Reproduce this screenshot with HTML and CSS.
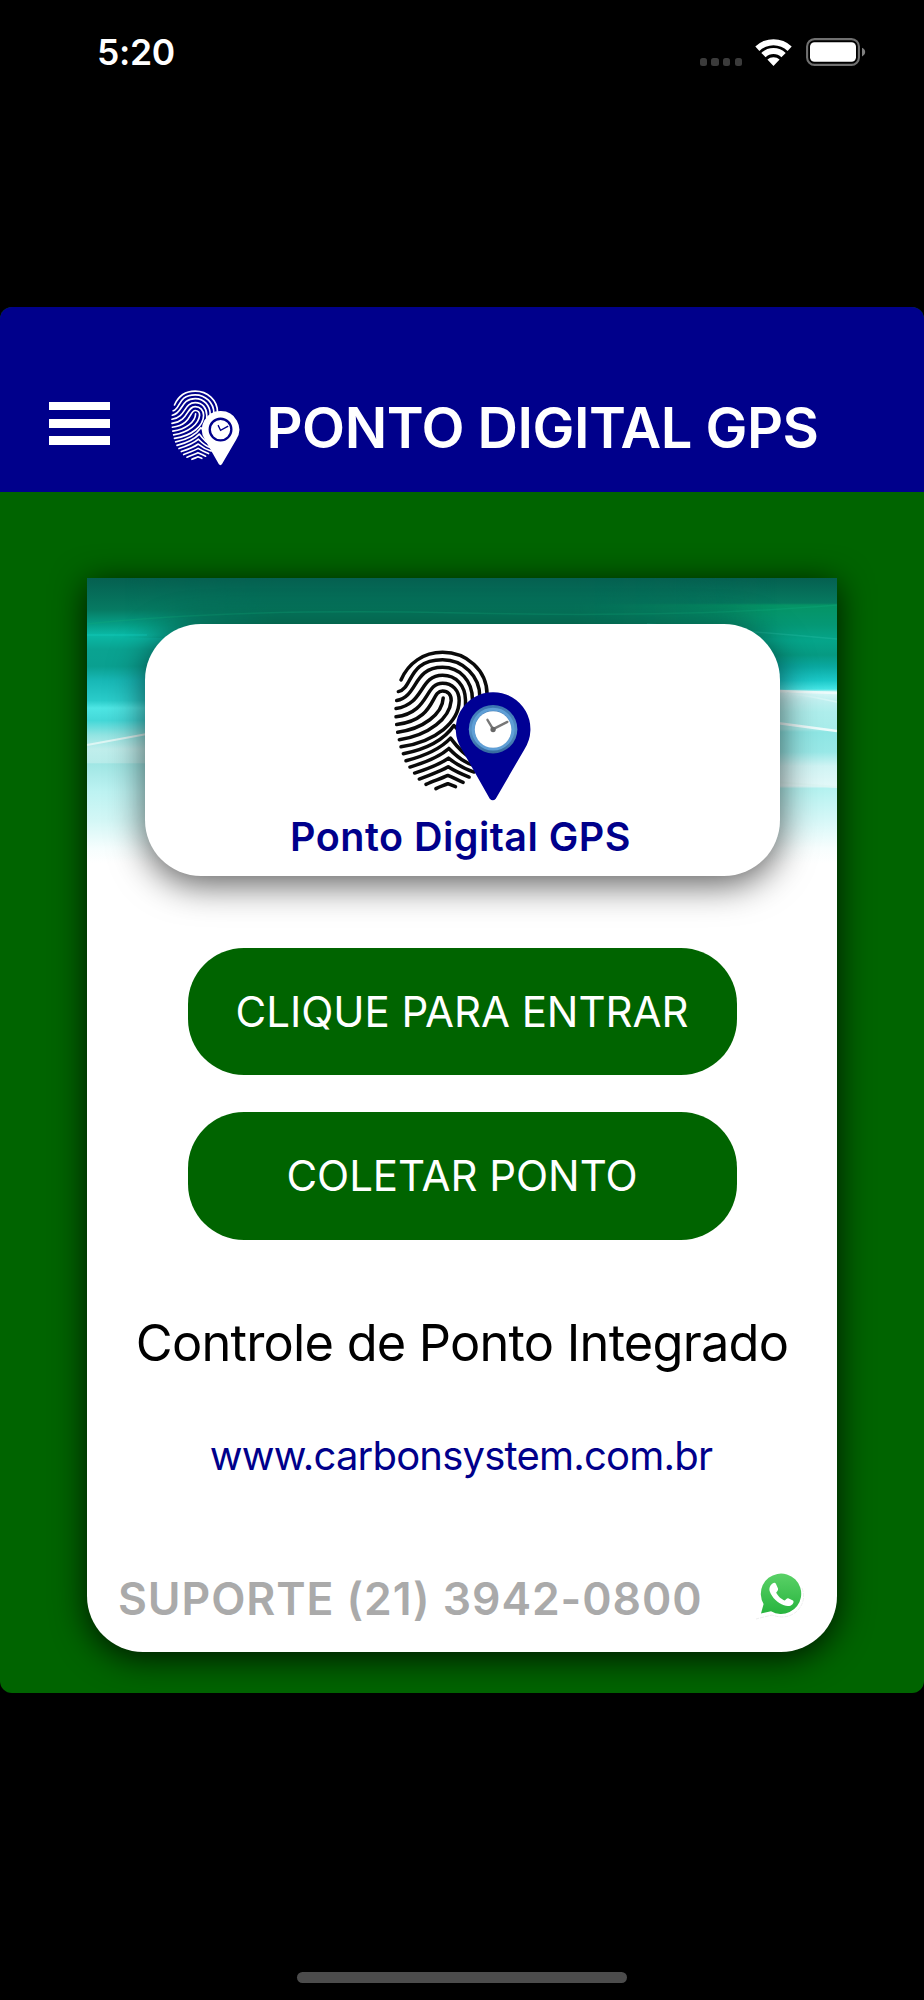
FILE: index.html
```html
<!DOCTYPE html>
<html lang="pt-BR">
<head>
<meta charset="utf-8">
<title>Ponto Digital GPS</title>
<link rel="stylesheet" href="styles.css">
</head>
<body>
<div class="screen">
  <header class="status">
    <span class="time">5:20</span>
    <div class="signals">
      <div class="dots"><i></i><i></i><i></i><i></i></div>
      <svg class="wifi" viewBox="0 0 37 27"><path d="M0.3 7.6A26 26 0 0 1 36.7 7.6L32.6 12A20 20 0 0 0 4.4 12ZM6.3 13.9A17.5 17.5 0 0 1 30.7 13.9L26.4 18.2A11.5 11.5 0 0 0 10.6 18.2ZM12.4 20.6A9 9 0 0 1 24.6 20.6L18.5 27Z"/></svg>
      <svg class="battery" viewBox="0 0 60 28"><rect x="1.1" y="1.1" width="51.8" height="25.8" rx="7.5" fill="none" stroke="#707070" stroke-width="2.1"/><rect x="4" y="4.2" width="46" height="19.6" rx="4.5" fill="#fff"/><path d="M56 9.8C58 10.6 59.2 12.2 59.2 14.1S58 17.6 56 18.4Z" fill="#808080"/></svg>
    </div>
  </header>
  <div class="app">
    <nav class="bar">
      <div class="menu"><i></i><i></i><i></i></div>
      <svg class="mark" viewBox="42 30 412 454">
        <g class="ridges light"><use href="#print"/></g>
        <path class="halo" d="M339 157A111 111 0 0 0 246 329L330 477Q339 487 348 477L434 329A111 111 0 0 0 339 157Z"/>
        <circle cx="340" cy="268" r="65" fill="#fff" stroke="#00008b" stroke-width="14"/>
        <path d="M325 241L340 272L386 247" fill="none" stroke="#00008b" stroke-width="8"/>
      </svg>
      <h1>PONTO DIGITAL GPS</h1>
    </nav>
    <main class="card">
      <svg class="waves" viewBox="0 0 750 285" preserveAspectRatio="none">
        <defs>
          <linearGradient id="wl" x1="0" y1="0" x2="0" y2="1">
            <stop offset="0" stop-color="#056050"/><stop offset=".11" stop-color="#067a62"/><stop offset=".165" stop-color="#06a088"/><stop offset=".2" stop-color="#0ab9a6"/><stop offset=".25" stop-color="#0aa391"/><stop offset=".31" stop-color="#0aa090"/><stop offset=".36" stop-color="#18b8b6"/><stop offset=".43" stop-color="#2accca"/><stop offset=".456" stop-color="#4ee6e4"/><stop offset=".5" stop-color="#44d8d8"/><stop offset=".55" stop-color="#90e4e2"/><stop offset=".6" stop-color="#c0eeec"/><stop offset=".648" stop-color="#b8ecea"/><stop offset=".652" stop-color="#a0e6e4"/><stop offset=".75" stop-color="#bdf3f2"/><stop offset=".85" stop-color="#d3f7f6"/><stop offset=".95" stop-color="#f6fefe"/><stop offset="1" stop-color="#fff"/>
          </linearGradient>
          <linearGradient id="wr" x1="0" y1="0" x2="0" y2="1">
            <stop offset="0" stop-color="#056050"/><stop offset=".088" stop-color="#067a60"/><stop offset=".095" stop-color="#059465"/><stop offset=".165" stop-color="#059875"/><stop offset=".22" stop-color="#05a58a"/><stop offset=".27" stop-color="#069a82"/><stop offset=".31" stop-color="#0aa8a0"/><stop offset=".36" stop-color="#1cc8c8"/><stop offset=".39" stop-color="#45e4e4"/><stop offset=".4" stop-color="#d8f8f8"/><stop offset=".43" stop-color="#c0f0f0"/><stop offset=".47" stop-color="#aeeeec"/><stop offset=".53" stop-color="#a8ecea"/><stop offset=".54" stop-color="#8ee6e4"/><stop offset=".61" stop-color="#98e8e7"/><stop offset=".66" stop-color="#d0f4f4"/><stop offset=".73" stop-color="#e2f8f8"/><stop offset=".738" stop-color="#b4f2f0"/><stop offset=".85" stop-color="#d6f8f8"/><stop offset=".95" stop-color="#f8fefe"/><stop offset="1" stop-color="#fff"/>
          </linearGradient>
          <linearGradient id="top" x1="0" y1="0" x2="0" y2="1"><stop offset="0" stop-color="#056050"/><stop offset="1" stop-color="#058a68"/></linearGradient>
          <linearGradient id="fade"><stop offset=".3" stop-color="#000"/><stop offset=".9" stop-color="#fff"/></linearGradient>
          <linearGradient id="mid"><stop offset=".05" stop-color="#000"/><stop offset=".25" stop-color="#fff"/><stop offset=".65" stop-color="#fff"/><stop offset=".92" stop-color="#000"/></linearGradient>
          <mask id="mr"><rect width="750" height="285" fill="url(#fade)"/></mask>
          <mask id="mm"><rect width="750" height="285" fill="url(#mid)"/></mask>
        </defs>
        <rect width="750" height="285" fill="url(#wl)"/>
        <rect width="750" height="285" fill="url(#wr)" mask="url(#mr)"/>
        <rect width="750" height="60" fill="url(#top)" mask="url(#mm)"/>
        <g fill="none" stroke-width="1.5">
          <path d="M0 46Q150 30 375 35T750 27" stroke="#0fa87c" opacity=".35"/>
          <path d="M0 57H60" stroke="#12c4b6" opacity=".6"/>
          <path d="M560 46Q650 52 750 61" stroke="#22b8a0" opacity=".45"/>
          <path d="M0 167L60 156" stroke="#def6f4" stroke-width="2"/>
          <path d="M690 113L750 115M690 145L750 153" stroke="#ecfbfb" stroke-width="2.5"/>
          <path d="M700 115Q725 118 750 124" stroke="#d4f6f6"/>
          <path d="M690 204L750 209" stroke="#dcf6f4" stroke-width="2"/>
        </g>
      </svg>
      <section class="logo">
        <svg class="emblem" viewBox="42 30 412 454">
          <defs>
            <g id="print">
              <path d="M63 120C85 70 130 37 188 37C260 37 322 90 322 165"/>
              <path d="M55 155C100 145 82 59 188 59C250 59 300 108 300 170"/>
              <path d="M50 182C115 170 98 82 188 82C240 82 278 122 278 180"/>
              <path d="M48 206C135 193 117 106 188 106C230 106 256 138 257 180V200"/>
              <path d="M48 231C150 218 133 130 188 130C218 130 238 152 238 182C238 245 170 305 63 321"/>
              <path d="M50 254C168 240 152 153 188 153C204 153 215 165 214 182C209 235 150 285 58 300"/>
              <path d="M190 174C188 222 130 267 53 277"/>
              <path d="M70 342C150 326 197 294 222 257L240 275"/>
              <path d="M78 363C140 347 184 325 212 295C240 333 260 350 285 362"/>
              <path d="M90 382C140 367 180 350 207 326C230 350 255 370 285 378"/>
              <path d="M104 400C145 387 180 374 206 355C230 374 255 388 283 397"/>
              <path d="M118 418C150 405 180 396 205 381C225 394 245 403 268 412"/>
              <path d="M138 434C160 424 185 416 204 407C220 413 235 422 250 428"/>
              <path d="M168 447C180 441 193 437 204 432L227 441"/>
            </g>
            <linearGradient id="rim" x1="0" y1="0" x2="0" y2="1"><stop offset="0" stop-color="#3a74b0"/><stop offset=".5" stop-color="#5592c8"/><stop offset="1" stop-color="#35699f"/></linearGradient>
          </defs>
          <g class="ridges"><use href="#print"/></g>
          <path fill="#000094" d="M339 157A111 111 0 0 0 246 329L330 477Q339 487 348 477L434 329A111 111 0 0 0 339 157Z"/>
          <circle cx="340" cy="268" r="73" fill="url(#rim)"/>
          <circle cx="340" cy="268" r="60" fill="none" stroke="#5f9fd6" stroke-width="9"/>
          <circle cx="340" cy="269" r="55" fill="#fff"/>
          <path d="M323 240L340 268L383 246" fill="none" stroke="#777" stroke-width="7" stroke-linecap="round"/>
          <circle cx="340" cy="269" r="8" fill="#666"/>
        </svg>
        <p>Ponto Digital GPS</p>
      </section>
      <button class="action">CLIQUE PARA ENTRAR</button>
      <button class="action">COLETAR PONTO</button>
      <p class="tagline">Controle de Ponto Integrado</p>
      <a class="site">www.carbonsystem.com.br</a>
      <footer class="support">
        <span>SUPORTE (21) 3942-0800</span>
        <svg class="whats" viewBox="0 0 52 50">
          <defs><linearGradient id="wa" x1="0" y1="0" x2="0" y2="1"><stop offset="0" stop-color="#5ad167"/><stop offset="1" stop-color="#27b43e"/></linearGradient></defs>
          <path d="M47 16Q52 30 41 40Q31 48 17 43L1 47" fill="none" stroke="#eee" stroke-width="1" stroke-dasharray="4 1"/>
          <path d="M6 41.5L8.600 32A20.2 20.2 0 1 1 16 39.3Z" fill="url(#wa)"/>
          <path d="M17.5 11.5C19 10.5 20.5 10.7 21 12L23 16.5C23.4 17.8 22.5 19 21.2 20.4C22.5 23.5 26 27 29.8 28.4C31 27.5 32 25.8 33.2 26.2L38 28.5C39 29.2 38.5 31 37.5 32.2C35.5 34.5 32 34.5 29 33.3C22.5 31 17 25.5 14.8 19.5C13.8 16.5 15 13 17.5 11.5Z" fill="#fff"/>
        </svg>
      </footer>
    </main>
  </div>
  <div class="home"></div>
</div>
</body>
</html>
```
FILE: styles.css
```css
* { box-sizing: border-box; }
body { margin: 0; background: #000; font-family: Inter, "Liberation Sans", sans-serif; }
h1, p { margin: 0; font-weight: inherit; }
.screen { width: 924px; height: 2000px; display: flex; flex-direction: column; align-items: center; background: #000; overflow: hidden; }
.status { width: 100%; height: 307px; padding: 32px 58px 0 97px; display: flex; justify-content: space-between; align-items: flex-start; color: #fff; }
.time { font-size: 35.5px; line-height: 41px; font-weight: 600; letter-spacing: -.3px; }
.signals { display: flex; align-items: flex-start; padding-top: 6px; }
.dots { display: flex; gap: 4.5px; padding-top: 20px; margin-right: 13px; }
.dots i { width: 7.2px; height: 8px; border-radius: 2.5px; background: #3b3b3b; }
.wifi { width: 37px; height: 27px; fill: #fff; margin: 1px 14px 0 0; }
.battery { width: 60px; height: 28px; }
.app { width: 924px; height: 1386px; border-radius: 12px; background: #006400; overflow: hidden; flex: none; display: flex; flex-direction: column; align-items: center; }
.bar { width: 100%; height: 184.5px; background: #00008b; display: flex; align-items: flex-start; padding: 83px 0 0 49px; flex: none; }
.menu { width: 61px; display: flex; flex-direction: column; gap: 8.6px; padding-top: 11.5px; }
.menu i { height: 8.8px; background: #fff; }
.mark { width: 68.5px; height: 75.5px; margin-left: 61px; flex: none; }
.ridges { fill: none; stroke: #0a0a0a; stroke-width: 10.5; stroke-linecap: round; stroke-linejoin: round; }
.ridges.light { stroke: #fff; stroke-width: 10; }
.halo { fill: #fff; }
.bar h1 { color: #fff; font-size: 56px; line-height: 60px; font-weight: 600; letter-spacing: -.5px; margin: 8px 0 0 27px; white-space: nowrap; }
.card { position: relative; width: 750px; height: 1074px; margin-top: 86.5px; padding-top: 46px; background: #fff; border-radius: 0 0 56px 56px; box-shadow: 0 6px 34px rgba(0, 0, 0, .8); display: flex; flex-direction: column; align-items: center; }
.waves { position: absolute; top: 0; left: 0; width: 750px; height: 285px; }
.logo { position: relative; width: 635px; height: 251.5px; background: #fff; border-radius: 56px; box-shadow: 0 8px 36px rgba(0, 0, 0, .65); display: flex; flex-direction: column; align-items: center; padding-top: 26px; }
.emblem { width: 137px; height: 151px; }
.logo p { color: #00008b; font-size: 39.5px; line-height: 48px; font-weight: 600; letter-spacing: .48px; margin-top: 12px; padding-right: 3px; }
.action { width: 549px; height: 127.5px; border: 0; border-radius: 56px; background: #006400; color: #fff; font: 400 42px/50px Inter, sans-serif; letter-spacing: -.05px; padding: 1px 0 0; margin-top: 72px; white-space: nowrap; }
.action + .action { margin-top: 37px; }
.tagline { font-size: 50.5px; line-height: 60px; letter-spacing: -.78px; margin-top: 73px; white-space: nowrap; }
.site { color: #00008b; font-size: 40px; line-height: 48px; letter-spacing: -.79px; margin-top: 59px; padding-right: 2px; white-space: nowrap; }
.support { align-self: stretch; display: flex; align-items: flex-start; justify-content: space-between; padding: 0 30px 0 31px; margin-top: 92px; color: #aaa; font-size: 44.5px; line-height: 54px; font-weight: 600; letter-spacing: .93px; white-space: nowrap; }
.whats { width: 52px; height: 50px; }
.home { width: 330px; height: 11px; border-radius: 6px; background: #4c4c4c; margin-top: 279px; flex: none; }
```
